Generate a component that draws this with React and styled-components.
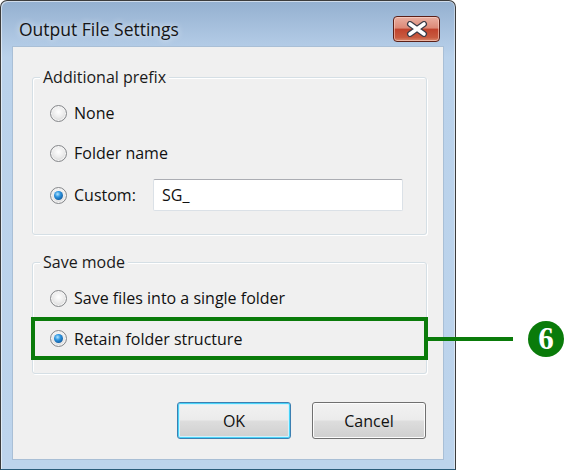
import React from 'react';
import styled, { createGlobalStyle, css } from 'styled-components';

const GREEN = '#0a7b0a';

const GlobalStyle = createGlobalStyle`
  html, body {
    margin: 0;
    background: #ffffff;
  }
  body {
    font-family: 'Open Sans', 'Noto Sans', sans-serif;
  }
`;

function Radio({ checked }) {
  return <RadioCircle $checked={checked} />;
}

function Option({ checked, label, labelWidth, highlighted, callout, children }) {
  return (
    <OptionRow $highlighted={highlighted}>
      <Radio checked={checked} />
      <OptionLabel style={labelWidth ? { width: labelWidth } : undefined}>{label}</OptionLabel>
      {children}
      {callout && (
        <Callout>
          <CalloutLine />
          <CalloutBadge>&#54;</CalloutBadge>
        </Callout>
      )}
    </OptionRow>
  );
}

function App() {
  return (
    <Page>
      <GlobalStyle />
      <Window>
        <TitleBar>
          <Title>Output File Settings</Title>
          <CloseButton aria-label="Close">
            <svg width="24" height="16" viewBox="0 0 24 16">
              <path
                d="M5 3 L19 13 M19 3 L5 13"
                stroke="#3b3b46"
                strokeWidth="6"
                strokeLinecap="round"
              />
              <path
                d="M5 3 L19 13 M19 3 L5 13"
                stroke="#ffffff"
                strokeWidth="3.6"
                strokeLinecap="round"
              />
            </svg>
          </CloseButton>
        </TitleBar>
        <Client>
          <GroupBox>
            <Legend>Additional prefix</Legend>
            <Option label="None" />
            <Option label="Folder name" />
            <Option checked label="Custom:" labelWidth={79}>
              <TextField defaultValue="SG_" />
            </Option>
          </GroupBox>
          <GroupBox $second>
            <Legend>Save mode</Legend>
            <Option label="Save files into a single folder" />
            <Option checked highlighted callout label="Retain folder structure" />
          </GroupBox>
          <ButtonRow>
            <DialogButton $default>OK</DialogButton>
            <DialogButton>Cancel</DialogButton>
          </ButtonRow>
        </Client>
      </Window>
    </Page>
  );
}

const Page = styled.div`
  width: 587px;
  height: 471px;
  display: flex;
  align-items: flex-start;
  font-size: 16px;
  color: #111;
`;

const Window = styled.div`
  box-sizing: border-box;
  width: 456px;
  height: 470px;
  display: flex;
  flex-direction: column;
  padding: 0 12px 10px 12px;
  border: 1px solid #3c3c3c;
  border-bottom-color: #2b5c7a;
  border-radius: 7px 7px 0 0;
  background: linear-gradient(180deg, #94b0d0 0px, #adc6e2 36px, #bad2eb 56px, #bdd4ec 100%);
  box-shadow: inset 1px 1px 0 rgba(255, 255, 255, 0.55), inset -1px 0 0 rgba(255, 255, 255, 0.4);
`;

const TitleBar = styled.div`
  height: 46px;
  display: flex;
  align-items: center;
  justify-content: space-between;
  padding-top: 10px;
  box-sizing: border-box;
`;

const Title = styled.span`
  padding-left: 6px;
  font-size: 17.5px;
  color: #151515;
  text-shadow: 0 0 6px rgba(255, 255, 255, 0.9);
`;

const CloseButton = styled.div`
  box-sizing: border-box;
  width: 47px;
  height: 26px;
  margin-right: 3px;
  display: flex;
  align-items: center;
  justify-content: center;
  border: 1px solid #5b2018;
  border-radius: 4px;
  background: linear-gradient(180deg, #eab0a2 0%, #dc8a78 45%, #c1442e 52%, #c85a3f 85%, #d98a6e 100%);
  box-shadow: inset 0 0 0 1px rgba(255, 220, 210, 0.55);
`;

const Client = styled.div`
  flex: 1;
  display: flex;
  flex-direction: column;
  background: #f0f0f0;
  box-shadow: 0 0 0 1px #a9bfd6;
`;

const GroupBox = styled.div`
  box-sizing: border-box;
  display: flex;
  flex-direction: column;
  margin: ${(p) => (p.$second ? '27px' : '30px')} 16px 0 19px;
  padding: 0 0 ${(p) => (p.$second ? '13px' : '17px')} 0;
  border: 1px solid #d5dfe5;
  border-radius: 3px;
  box-shadow: inset 1px 1px 0 #ffffff, 1px 1px 0 #ffffff;
`;

const Legend = styled.div`
  align-self: flex-start;
  margin: -11px 0 6px 7px;
  padding: 0 3px;
  line-height: 20px;
  background: #f0f0f0;
  color: #1a1a1a;
`;

const OptionRow = styled.div`
  position: relative;
  box-sizing: border-box;
  height: 40px;
  display: flex;
  align-items: center;
  padding-left: 17px;

  &:has(input) {
    height: 44px;
  }

  ${(p) =>
    p.$highlighted &&
    css`
      height: 43px;
      margin: -1px -2px 0 -2px;
      padding-left: 15px;
      border: 4px solid ${GREEN};
    `}
`;

const RadioCircle = styled.span`
  position: relative;
  box-sizing: border-box;
  flex: none;
  width: 17px;
  height: 17px;
  border-radius: 50%;
  border: 1px solid #85878a;
  background: radial-gradient(circle at 50% 40%, #ffffff 0%, #ececec 45%, #c9c9c9 100%);
  box-shadow: inset 0 0 0 1px #f6f6f6;

  ${(p) =>
    p.$checked &&
    css`
      &::after {
        content: '';
        position: absolute;
        left: 3px;
        top: 3px;
        width: 9px;
        height: 9px;
        border-radius: 50%;
        background: radial-gradient(circle at 40% 35%, #b5e6ff 0%, #2f96e0 35%, #125ea3 75%, #0b3b68 100%);
      }
    `}
`;

const OptionLabel = styled.span`
  margin-left: 7px;
  white-space: nowrap;
`;

const TextField = styled.input`
  box-sizing: border-box;
  width: 250px;
  height: 32px;
  padding: 0 8px;
  border: 1px solid #dbe1e7;
  border-top-color: #abadb3;
  border-radius: 2px;
  background: #ffffff;
  font: inherit;
  color: #111;
  outline: none;
`;

const Callout = styled.div`
  position: absolute;
  left: 100%;
  top: 50%;
  transform: translateY(-50%);
  display: flex;
  align-items: center;
  gap: 15px;
`;

const CalloutLine = styled.div`
  width: 89px;
  height: 4px;
  background: ${GREEN};
`;

const CalloutBadge = styled.div`
  width: 36px;
  height: 36px;
  border-radius: 50%;
  background: ${GREEN};
  color: #ffffff;
  display: flex;
  align-items: center;
  justify-content: center;
  font-family: 'Liberation Serif', 'DejaVu Serif', serif;
  font-weight: bold;
  font-size: 31px;
  line-height: 1;
`;

const ButtonRow = styled.div`
  display: flex;
  justify-content: flex-end;
  gap: 21px;
  margin: 28px 17px 0 0;
`;

const DialogButton = styled.div`
  box-sizing: border-box;
  width: 114px;
  height: 37px;
  display: flex;
  align-items: center;
  justify-content: center;
  color: #111;
  border: 1px solid #707070;
  border-radius: 3px;
  background: linear-gradient(180deg, #f2f2f2 0%, #ebebeb 48%, #dddddd 52%, #cfcfcf 100%);
  box-shadow: inset 0 0 0 1px #fcfcfc;

  ${(p) =>
    p.$default &&
    css`
      border-color: #3c7fb1;
      box-shadow: inset 0 0 0 1px #48d3f8, inset 0 0 0 2px #d2f1fc;
    `}
`;

export default App;
